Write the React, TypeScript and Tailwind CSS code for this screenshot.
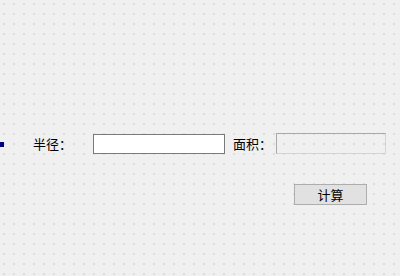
export default function App() {
  return (
    <div className="w-[400px] h-[276px] bg-[#f0f0f0] bg-[radial-gradient(circle,#c4c4c4_0.6px,transparent_0.8px)] bg-[length:10px_10px] bg-[position:-1px_-1px] overflow-hidden font-['Noto_Sans_CJK_SC',sans-serif] text-[12px] text-black flex flex-col">
      <div className="flex items-center h-[21px] mt-[133px]">
        <div className="w-[4px] h-[5px] bg-[#000080] mt-[1px]" />
        <span className="ml-[29px] w-[60px] leading-none text-[13px]">半径：</span>
        <input
          type="text"
          className="w-[132px] h-[20px] bg-white border border-[#7a7a7a] outline-none px-1"
        />
        <span className="ml-[8px] w-[43px] leading-none text-[13px]">面积：</span>
        <input
          type="text"
          readOnly
          className="w-[110px] h-[21px] bg-transparent border border-[#d4d4d4] border-t-[#a8a8a8] border-l-[#a8a8a8] outline-none"
        />
      </div>
      <div className="flex mt-[30px] pl-[294px]">
        <button className="w-[73px] h-[21px] bg-[#e1e1e1] border border-[#adadad] leading-none text-[13px]">
          计算
        </button>
      </div>
    </div>
  );
}
